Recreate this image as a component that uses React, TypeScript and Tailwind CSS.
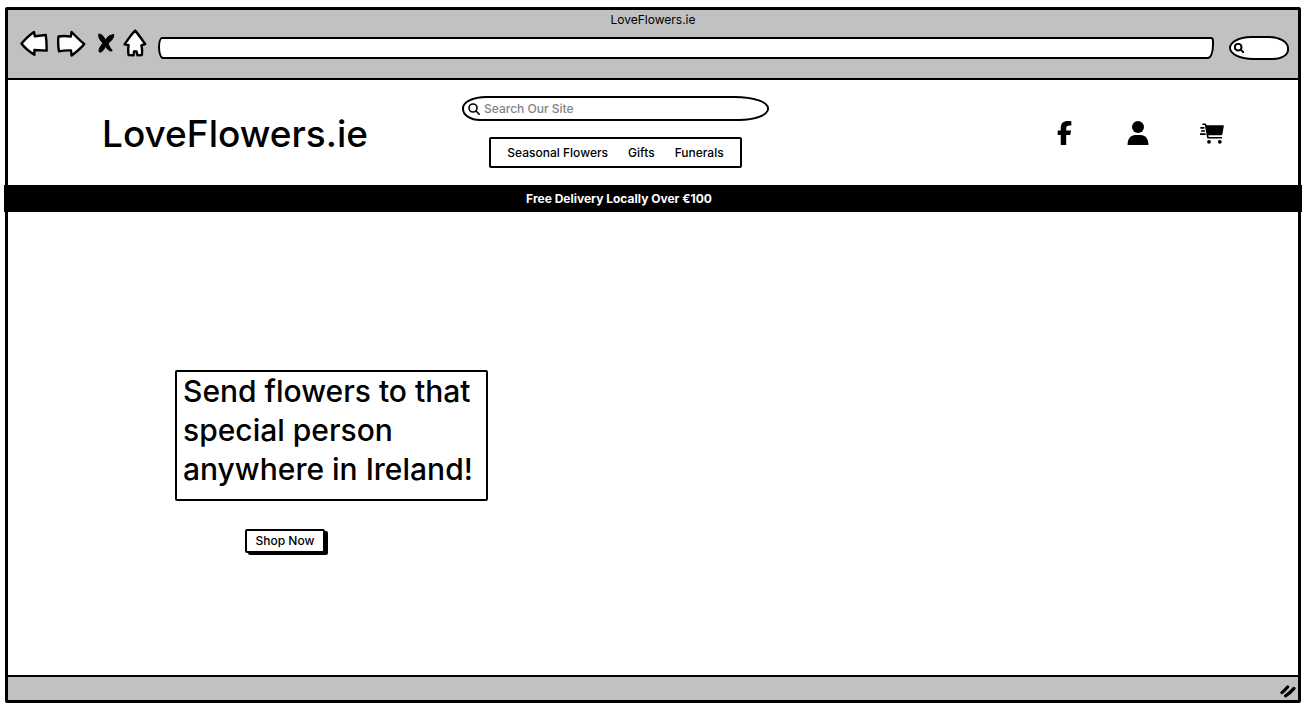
import { FaFacebookF } from "react-icons/fa6";

const navLinks = ["Seasonal Flowers", "Gifts", "Funerals"];

function BackIcon() {
  return (
    <svg width="28" height="27" viewBox="0 0 28 27" fill="white" stroke="black" strokeWidth="2.4" strokeLinejoin="round" aria-hidden="true">
      <path d="M1.5 13.5 C5 9.5 9.5 5 14 2 L14.8 6.2 L25.8 5 Q26.8 13 26.6 20.6 L14.4 20 L14.4 24.8 C10 22 5 18.5 1.5 13.5Z" />
    </svg>
  );
}

function ForwardIcon() {
  return (
    <svg width="30" height="27" viewBox="0 0 30 27" fill="white" stroke="black" strokeWidth="2.4" strokeLinejoin="round" aria-hidden="true">
      <path d="M2.5 6.5 Q8 5.4 14.8 6.6 L15.6 2 C19 5.5 24 10.5 28.2 14 C25 18.5 20 22 15.6 25.6 L15 20.4 Q8 20.2 3 21.4 Q1.6 13 2.5 6.5Z" />
    </svg>
  );
}

function StopIcon() {
  return (
    <svg width="18" height="21" viewBox="0 0 18 21" stroke="black" strokeWidth="1" strokeLinejoin="round" aria-hidden="true">
      <path d="M1.6 1.2 Q5.6 .6 8.2 7 Q11.6 1.6 16.8 1.4 Q17.2 5.6 11 10.4 Q12.6 14.6 15.2 17.6 Q13 19.6 8.4 13.6 Q5 20.2 2.4 19 Q.8 16.4 5.8 10.2 Q1 5.4 1.6 1.2Z" />
    </svg>
  );
}

function HomeIcon() {
  return (
    <svg width="24" height="28" viewBox="0 0 24 28" fill="white" stroke="black" strokeWidth="2.4" strokeLinejoin="round" aria-hidden="true">
      <path d="M12.2 1.6 C15.5 5.5 19 10.5 22.2 15 L18.4 16.4 Q19.6 21 18.8 26 L14.4 26.2 L13.6 22.4 L11 22.4 L10.6 26.4 L5.6 26 Q4.8 21 5.6 16.2 L1.6 15.4 C5 10.5 8.4 5 12.2 1.6Z" />
    </svg>
  );
}

function SearchIcon({ size, weight }: { size: number; weight: number }) {
  return (
    <svg width={size} height={size} viewBox="0 0 12 12" fill="none" stroke="black" strokeWidth={weight} strokeLinecap="round" className="shrink-0" aria-hidden="true">
      <circle cx="5" cy="5" r="4" />
      <path d="M8 8 L11.2 11.2" />
    </svg>
  );
}

function PersonIcon() {
  return (
    <svg width="22" height="24" viewBox="0 0 22 24" aria-hidden="true">
      <circle cx="11" cy="6" r="6" />
      <path d="M.6 24 C.4 18 3.4 14 8.6 14 H13.4 C18.6 14 21.6 18 21.4 24Z" />
    </svg>
  );
}

function CartIcon() {
  return (
    <svg width="24" height="22" viewBox="0 0 24 22" aria-hidden="true">
      <path d="M5.6 2.2 H23 Q24 2.2 23.8 3.2 L22.4 11 Q22.2 12.2 21 12.2 H7.8Z" />
      <path d="M3 1.2 H5.4 L8 14.8 H21.4" fill="none" stroke="black" strokeWidth="1.6" strokeLinecap="round" strokeLinejoin="round" />
      <path d="M.4 4.9 H4.4 M1 8 H5 M0 11.1 H5.6" fill="none" stroke="black" strokeWidth="1.7" />
      <circle cx="9" cy="18.8" r="1.9" />
      <circle cx="19.8" cy="18.8" r="1.9" />
    </svg>
  );
}

function BrowserBar() {
  return (
    <div className="flex h-[70px] flex-col border-b-2 border-black bg-[#c1c1c1]">
      <p className="h-4 text-center text-xs leading-5">LoveFlowers.ie</p>
      <div className="flex items-center pl-3 pr-[9px]">
        <div className="flex shrink-0 items-center">
          <button type="button" aria-label="Back" className="mr-2"><BackIcon /></button>
          <button type="button" aria-label="Forward" className="mr-[11px]"><ForwardIcon /></button>
          <button type="button" aria-label="Stop" className="mr-2"><StopIcon /></button>
          <button type="button" aria-label="Home" className="mr-[11px]"><HomeIcon /></button>
        </div>
        <input
          type="text"
          aria-label="Address"
          className="mt-2.5 h-[22px] min-w-0 flex-1 rounded-[4px_3px_6px_5px/10px_4px_14px_12px] border-2 border-black bg-white px-2 text-xs outline-none"
        />
        <label className="ml-[15px] mt-2.5 flex h-6 w-[60px] shrink-0 items-center rounded-[22px_20px_16px_24px/12px_12px_10px_12px] border-2 border-black bg-white pl-[3px]">
          <SearchIcon size={10} weight={2.4} />
          <input type="text" aria-label="Search the web" className="w-full min-w-0 bg-transparent text-xs outline-none" />
        </label>
      </div>
    </div>
  );
}

function SiteHeader() {
  return (
    <header className="grid h-[105px] grid-cols-[454px_307px_1fr]">
      <h1 className="pl-[94px] pt-7 text-[37px] font-medium leading-[52px]">LoveFlowers.ie</h1>
      <div className="flex flex-col items-center pt-4">
        <label className="flex h-[25px] w-full items-center gap-1 rounded-[24px_34px_30px_18px/12px] border-2 border-black pl-1">
          <SearchIcon size={12} weight={1.6} />
          <input
            type="text"
            aria-label="Search our site"
            placeholder="Search Our Site"
            className="w-full min-w-0 bg-transparent text-xs font-medium outline-none placeholder:text-[#80838a]"
          />
        </label>
        <nav className="mt-4 flex h-[31px] items-center gap-5 rounded-[2px] border-2 border-black px-4 text-xs font-medium">
          {navLinks.map((label) => (
            <a key={label} href="#" className="whitespace-nowrap">{label}</a>
          ))}
        </nav>
      </div>
      <div className="flex items-start justify-end pr-[74px] pt-[41px]">
        <a href="#" aria-label="Facebook" className="mr-[55px]"><FaFacebookF size={24} className="w-[15px]" /></a>
        <a href="#" aria-label="Account" className="mr-[51px]"><PersonIcon /></a>
        <a href="#" aria-label="Cart" className="pt-[2px]"><CartIcon /></a>
      </div>
    </header>
  );
}

export default function App() {
  return (
    <div className="flex min-h-screen flex-col bg-white pb-[3px] pl-[5px] pr-1 pt-[7px] font-['Inter','Liberation_Sans',sans-serif] text-black">
      <div className="flex flex-1 flex-col rounded-[2px] border-[3px] border-black">
        <BrowserBar />
        <SiteHeader />
        <p className="-mx-1 bg-black pr-[68px] text-center text-xs font-bold leading-[27px] text-white">
          Free Delivery Locally Over €100
        </p>
        <main className="flex-1 pl-[167px] pt-[158px]">
          <div className="flex w-[313px] flex-col items-start">
            <h2 className="h-[131px] w-full rounded-[2px] border-2 border-black px-1.5 text-[30px] font-medium leading-[39px]">
              Send flowers to that special person anywhere in Ireland!
            </h2>
            <button type="button" className="ml-[70px] mt-7 h-6 w-20 rounded-[2px] border-2 border-black bg-white text-xs font-medium leading-5 shadow-[3px_2px_0_black]">
              Shop Now
            </button>
          </div>
        </main>
        <footer className="flex h-[25px] items-center justify-end border-t-2 border-black bg-[#c1c1c1] pr-0.5 pt-1">
          <svg width="16" height="14" viewBox="0 0 16 14" fill="none" stroke="black" strokeWidth="3.2" strokeLinecap="round" aria-hidden="true">
            <path d="M2 8.6 Q5 6 7.6 3" />
            <path d="M5.6 11.8 Q10 9 14 4.4" />
          </svg>
        </footer>
      </div>
    </div>
  );
}
